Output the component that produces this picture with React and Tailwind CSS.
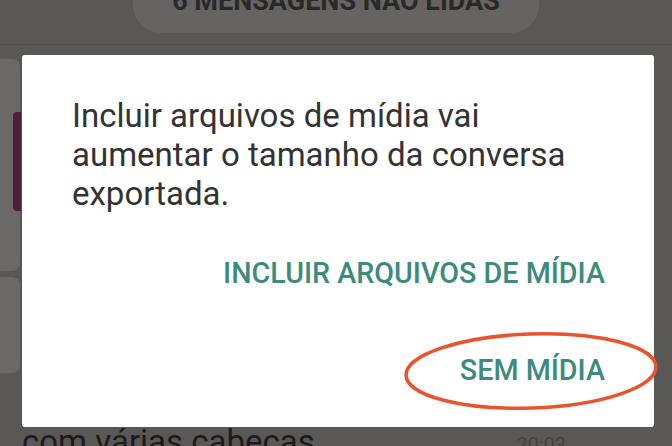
export default function App() {
  return (
    <div
      className="relative h-[446px] w-[672px] overflow-hidden bg-[#5a5856]"
      style={{ fontFamily: 'Roboto, "Liberation Sans", sans-serif' }}
    >
      {/* chat behind the dim overlay */}
      <div className="flex h-full flex-col">
        <div className="-mt-[41px] flex justify-center">
          <div className="flex h-[74px] w-[406px] items-end justify-center rounded-[28px] bg-[#666463] pb-[18px]">
            <span className="text-[27px] font-bold leading-none text-[#2a2929]">6 MENSAGENS NÃO LIDAS</span>
          </div>
        </div>
        <div className="mt-[11px] border-t border-[#4f4e4c]" />
        <div className="mt-[14px] flex flex-col gap-[6px]">
          <div className="relative -ml-[10px] h-[212px] w-[30px] rounded-[8px] bg-[#6b6967]">
            <div className="absolute left-[23px] top-[53px] h-[99px] w-[8px] rounded-l-[4px] bg-[#4e1d3a]" />
          </div>
          <div className="-ml-[10px] h-[96px] w-[30px] rounded-[8px] bg-[#6b6967]" />
          <div className="-ml-[10px] flex h-[90px] w-[600px] items-start justify-between rounded-[8px] bg-[#595857] pl-[32px] pr-[24px] pt-[46px]">
            <span className="text-[33px] leading-none text-[#1c1b1b]">com várias cabeças</span>
            <span className="pt-[10px] text-[20px] leading-none text-[#444342]">20:03</span>
          </div>
        </div>
      </div>

      {/* dialog */}
      <div className="absolute left-[22px] top-[55px] h-[372px] w-[632px] rounded-[3px] bg-white">
        <p className="pl-[50px] pt-[41px] text-[33px] leading-[39px] text-[#333333]">
          Incluir arquivos de mídia vai
          <br />
          aumentar o tamanho da conversa
          <br />
          exportada.
        </p>
        <div className="mt-[43px] flex flex-col items-end gap-[63px] pr-[49px]">
          <button className="text-[28.7px] font-medium leading-[34px] text-[#3c8b7c]">INCLUIR ARQUIVOS DE MÍDIA</button>
          <button className="text-[28.7px] font-medium leading-[34px] text-[#3c8b7c]">SEM MÍDIA</button>
        </div>
      </div>

      {/* annotation */}
      <svg className="absolute left-[400px] top-[330px]" width="262" height="84" viewBox="0 0 262 84">
        <ellipse cx="131" cy="41" rx="125" ry="37" fill="none" stroke="#e9542e" strokeWidth="3.5" transform="rotate(-2 131 41)" />
      </svg>
    </div>
  );
}
